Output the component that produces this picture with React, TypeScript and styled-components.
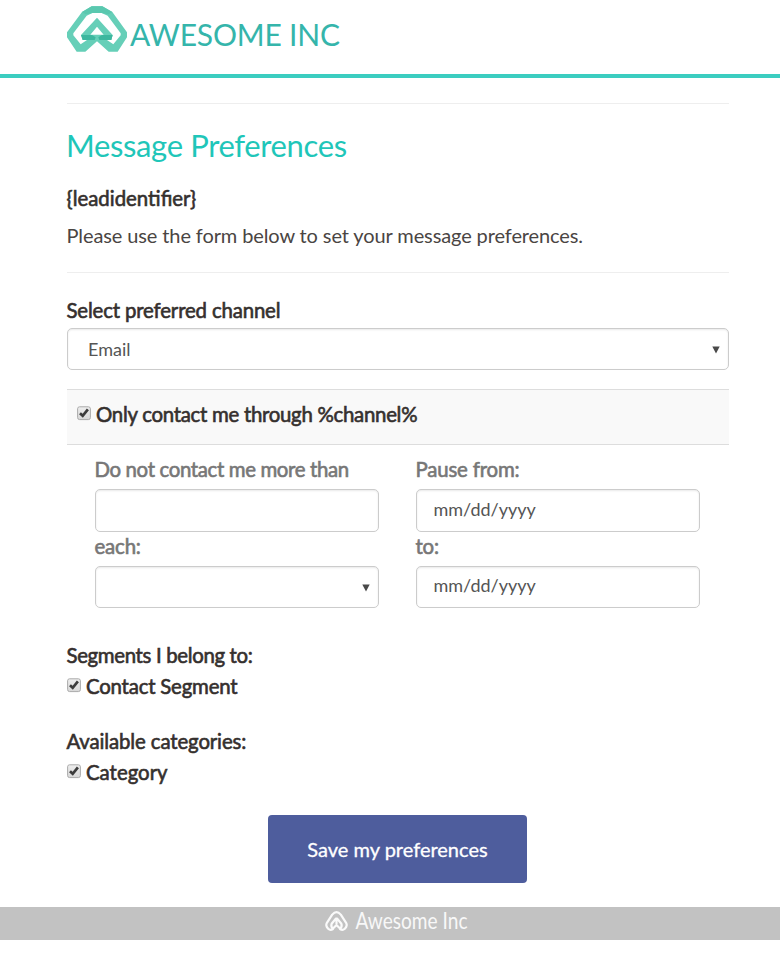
import React from "react";
import styled, { createGlobalStyle } from "styled-components";

const GlobalStyle = createGlobalStyle`
  * { box-sizing: border-box; }
  body {
    margin: 0;
    background: #fff;
    color: #35302e;
    font: 400 20px/28px Lato, sans-serif;
  }
`;

const Header = styled.header`
  height: 78px;
  padding: 4px 0 0 64px;
  border-bottom: 4px solid #3bcdc0;
`;

const Logo = styled.svg`
  display: block;
  overflow: visible;
`;

const Main = styled.main`
  width: 662px;
  margin: 25px 0 0 67px;
`;

const Rule = styled.hr`
  height: 1px;
  margin: 0;
  border: 0;
  background: #eee;
`;

const Title = styled.h1`
  margin: 22px 0 0 -1px;
  font-size: 31px;
  font-weight: 400;
  line-height: 38px;
  letter-spacing: -0.36px;
  color: #1fc6b9;
`;

const Strong = styled.div<{ $spacing?: number; $top?: number }>`
  margin: ${(p) => p.$top ?? 0}px 0 0 -0.5px;
  padding-bottom: 2px;
  font-size: 20.4px;
  line-height: 26px;
  white-space: nowrap;
  letter-spacing: ${(p) => p.$spacing ?? -0.16}px;
  font-variant-ligatures: common-ligatures;
  -webkit-text-stroke: 0.6px currentColor;
`;

const Intro = styled.p`
  margin: 8px 0 23px -0.5px;
  white-space: nowrap;
  letter-spacing: -0.11px;
  color: #4a4543;
`;

const Control = styled.div<{ $height: number; $top?: number }>`
  display: flex;
  align-items: center;
  justify-content: space-between;
  height: ${(p) => p.$height}px;
  margin-top: ${(p) => p.$top ?? 0}px;
  border: 1px solid #ccc;
  border-radius: 5px;
  box-shadow: inset 0 1px 2px rgba(0, 0, 0, 0.09);
  background: #fff;
  font-size: 18px;
  color: #555;
`;

const Value = styled.span<{ $left: number; $lift?: number }>`
  padding: 0 0 ${(p) => p.$lift ?? 1}px ${(p) => p.$left}px;
`;

const Arrow = styled.svg<{ $drop?: number }>`
  margin: ${(p) => p.$drop ?? 0}px 8px 0 0;
`;

const Exclusive = styled.div`
  height: 56px;
  margin-top: 19px;
  padding: 11px 10px 0;
  border: solid #ddd;
  border-width: 1px 0;
  background: #f9f9f9;
`;

const CheckRow = styled.label<{ $top?: number }>`
  display: flex;
  align-items: flex-start;
  gap: 5.5px;
  margin-top: ${(p) => p.$top ?? 0}px;
`;

const Box = styled.svg`
  flex: none;
  margin-top: 5px;
`;

const Limits = styled.div`
  display: grid;
  grid-template-columns: 284px 284px;
  column-gap: 37px;
  margin: 11px 28px 0;
  color: #777;
`;

const Field = styled.div`
  display: flex;
  flex-direction: column;
  gap: 5px;
`;

const Save = styled.button`
  display: block;
  width: 259px;
  height: 68px;
  margin: 28px 0 0 201px;
  padding: 0;
  border: 0;
  border-radius: 4px;
  background: #4e5d9d;
  color: #fff;
  font: 400 20px Lato, sans-serif;
  -webkit-text-stroke: 0.3px #fff;
`;

const Footer = styled.footer`
  display: flex;
  height: 33px;
  margin-top: 24px;
  padding-left: 322px;
  background: #c2c2c2;
`;

function Check({ label, spacing, top }: { label: string; spacing?: number; top?: number }) {
  return (
    <CheckRow $top={top}>
      <Box width="14" height="15" viewBox="0 0 14 15">
        <defs>
          <linearGradient id="boxFill" x2="0" y2="1">
            <stop offset="0" stopColor="#eee" />
            <stop offset="1" stopColor="#d8d8d8" />
          </linearGradient>
        </defs>
        <rect x=".6" y=".8" width="12.8" height="12.8" rx="2" fill="url(#boxFill)" stroke="#aaa" />
        <path d="M3 7.3 5.7 9.8 10.9 3.4" fill="none" stroke="#3c3c3c" strokeWidth="2.7" />
      </Box>
      <Strong $spacing={spacing}>{label}</Strong>
    </CheckRow>
  );
}

function DownArrow({ drop }: { drop?: number }) {
  return (
    <Arrow $drop={drop} width="8" height="8" viewBox="0 0 8 8">
      <path d="M.3.5H7.7L4 7.6Z" fill="#4a4a4a" />
    </Arrow>
  );
}

export default function App() {
  return (
    <>
      <GlobalStyle />
      <Header>
        <Logo width="290" height="52" viewBox="64 4 290 52">
          <g transform="translate(60 0) scale(.33333)">
            <path
              fill="#66cfb8"
              fillRule="evenodd"
              d="M95 19H127L157 36 201 97V112L173 155H146L111 124 76 155H50L21 112V97L66 36ZM97 39H125L143 47 182 100V106L160 133 141 120H154L158 105 111 53 63 105 68 120H81L62 133 40 106V100L80 47ZM111 80 131 104H91Z"
            />
            <path fill="#5ac8af" d="M95 19H127L157 36 146 43 125 39H97L77 43 66 36Z" />
            <path fill="#3db79f" d="M63 105H96L107 112 104 120H68ZM158 105H126L115 112 118 120H154Z" />
          </g>
          <text x="130" y="45.5" fontSize="30" textLength="210" fill="#35b5ab">AWESOME INC</text>
        </Logo>
      </Header>
      <Main>
        <Rule />
        <Title>Message Preferences</Title>
        <Strong $top={21} $spacing={0}>{"{leadidentifier}"}</Strong>
        <Intro>Please use the form below to set your message preferences.</Intro>
        <Rule />
        <Strong $top={24}>Select preferred channel</Strong>
        <Control $height={42} $top={3}>
          <Value $left={20}>Email</Value>
          <DownArrow drop={1} />
        </Control>
        <Exclusive>
          <Check label="Only contact me through %channel%" spacing={-0.28} />
        </Exclusive>
        <Limits>
          <Field>
            <Strong $spacing={-0.35}>Do not contact me more than</Strong>
            <Control $height={43} />
          </Field>
          <Field>
            <Strong>Pause from:</Strong>
            <Control $height={43}>
              <Value $left={16.5} $lift={3}>mm/dd/yyyy</Value>
            </Control>
          </Field>
          <Field>
            <Strong $top={1}>each:</Strong>
            <Control $height={42}>
              <Value $left={17} />
              <DownArrow drop={1} />
            </Control>
          </Field>
          <Field>
            <Strong $top={1}>to:</Strong>
            <Control $height={42}>
              <Value $left={16.5} $lift={4}>mm/dd/yyyy</Value>
            </Control>
          </Field>
        </Limits>
        <Strong $top={34} $spacing={-0.34}>Segments I belong to:</Strong>
        <Check label="Contact Segment" spacing={-0.2} top={3} />
        <Strong $top={27} $spacing={-0.12}>Available categories:</Strong>
        <Check label="Category" spacing={0} top={3} />
        <Save>Save my preferences</Save>
      </Main>
      <Footer>
        <Logo width="150" height="33" viewBox="322 907 150 33">
          <path
            d="M336.5 917.5V924M336 918.5 331.6 923.8Q330.6 926.4 333 929Q330.4 930.8 328.2 928.8Q325.2 925.6 326.9 922.8L332.2 914.6Q336.5 909.6 340.8 914.6L346.1 922.8Q347.8 925.6 344.8 928.8Q342.6 930.8 340 929Q342.4 926.4 341.4 923.8L337 918.5M332.5 929 336.5 925 340.5 929"
            fill="none"
            stroke="#fafafa"
            strokeWidth="2.2"
            strokeLinejoin="round"
          />
          <text x="355.5" y="929.2" fontSize="22.8" textLength="112" lengthAdjust="spacingAndGlyphs" fill="#f8f8f8">
            Awesome Inc
          </text>
        </Logo>
      </Footer>
    </>
  );
}
